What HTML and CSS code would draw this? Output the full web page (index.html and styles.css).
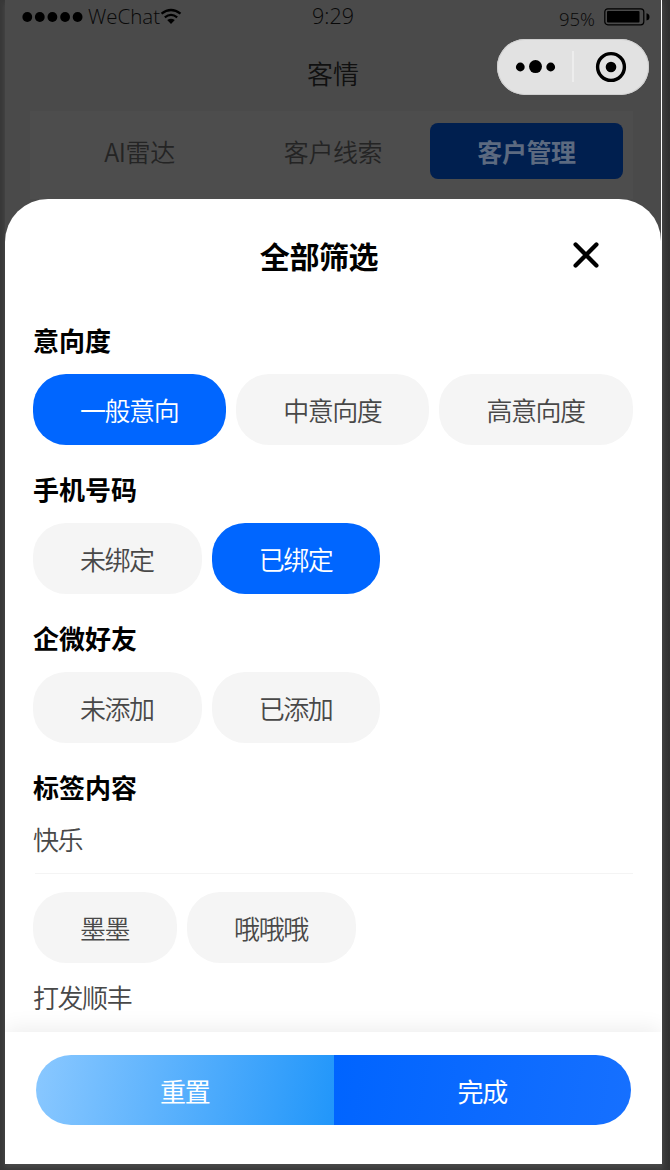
FILE: index.html
```html
<!DOCTYPE html>
<html lang="zh-CN">
<head>
<meta charset="utf-8">
<title>客情</title>
<link rel="stylesheet" href="styles.css">
</head>
<body>
<div class="device">
  <div class="page">
    <div class="status">
      <div class="carrier">
        <svg class="signal" width="62" height="12" viewBox="0 0 62 12"><circle cx="5.3" cy="6" r="4.9"/><circle cx="17.8" cy="6" r="4.9"/><circle cx="30.4" cy="6" r="4.9"/><circle cx="43.1" cy="6" r="4.9"/><circle cx="55.6" cy="6" r="4.9"/></svg>
        <span class="network">WeChat</span>
        <svg class="wifi" width="22" height="17" viewBox="0 0 22 17"><path d="M1.5 5.6Q11-1.6 20.5 5.6M4.8 9.3Q11 4.5 17.2 9.3" fill="none" stroke="#000" stroke-width="2.3"/><path d="M7.2 12Q11 9.4 14.8 12L11 16Z"/></svg>
      </div>
      <div class="time">9:29</div>
      <div class="power">
        <span class="percent">95%</span>
        <svg width="46" height="18" viewBox="0 0 46 18"><rect x=".8" y=".8" width="39" height="16" rx="3" fill="none" stroke="#000" stroke-width="1.2"/><rect x="3" y="3" width="32.5" height="11.5" rx="1"/><path d="M42.5 5.3Q45.5 6 45.5 9T42.5 12.5Z"/></svg>
      </div>
    </div>
    <div class="nav">客情</div>
    <div class="tabs">
      <div class="tab">AI雷达</div>
      <div class="tab">客户线索</div>
      <div class="tab tab-active">客户管理</div>
    </div>
    <div class="capsule">
      <svg width="152" height="56" viewBox="0 0 152 56"><circle cx="23.3" cy="28" r="4.4"/><circle cx="38.5" cy="27.6" r="6.5"/><circle cx="53.7" cy="28" r="4.4"/><path d="M76 12v31" stroke="#f1f1f1" stroke-width="1.5"/><circle cx="114" cy="28" r="13.4" fill="none" stroke="#000" stroke-width="3.4"/><circle cx="114" cy="28" r="5.3"/></svg>
    </div>
  </div>
  <div class="sheet">
    <div class="sheet-head">
      <span class="sheet-title">全部筛选</span>
      <svg class="close" width="26" height="26" viewBox="0 0 26 26"><path d="M2.6 2.6L23.4 23.4M23.4 2.6L2.6 23.4" stroke="#000" stroke-width="4.3" stroke-linecap="round"/></svg>
    </div>
    <div class="filters">
      <h3 class="group-title">意向度</h3>
      <div class="options"><span class="chip chip-on">一般意向</span><span class="chip">中意向度</span><span class="chip">高意向度</span></div>
      <h3 class="group-title">手机号码</h3>
      <div class="options"><span class="chip">未绑定</span><span class="chip chip-on">已绑定</span></div>
      <h3 class="group-title">企微好友</h3>
      <div class="options"><span class="chip">未添加</span><span class="chip">已添加</span></div>
      <h3 class="group-title">标签内容</h3>
      <div class="tag-name">快乐</div>
      <div class="divider"></div>
      <div class="options"><span class="chip">墨墨</span><span class="chip">哦哦哦</span></div>
      <div class="tag-name tag-next">打发顺丰</div>
    </div>
    <div class="actions">
      <div class="btn reset">重置</div>
      <div class="btn done">完成</div>
    </div>
  </div>
</div>
</body>
</html>
```
FILE: styles.css
```css
* { box-sizing: border-box; }
body {
  margin: 0;
  height: 1170px;
  padding-left: 5px;
  overflow: hidden;
  background: linear-gradient(90deg, #383838 0 655px, #3b3b3b 661px, #303030 670px);
  font-family: "Noto Sans CJK SC", sans-serif;
  font-size: 26px;
}
.device {
  position: relative;
  width: 657px;
  height: 1164px;
  background: #4a4a4a;
  border-right: 1px solid #fff;
  box-shadow: 0 3px 5px #4c4c4c;
}
.page { height: 199px; }
.status {
  display: grid;
  grid-template-columns: 1fr auto 1fr;
  height: 34px;
  padding: 0 11px 0 17px;
  font-family: "Open Sans", "Noto Sans", sans-serif;
  font-weight: 300;
  color: #080808;
}
.carrier, .power { display: flex; align-items: flex-start; }
.signal { margin: 11px 4px 0 0; }
.network { width: 72px; font-size: 20.5px; line-height: 33px; white-space: nowrap; }
.wifi { margin-top: 8px; }
.time { width: 48px; font-size: 21.5px; line-height: 31px; }
.power { justify-content: flex-end; }
.percent { margin-right: 9px; font-size: 18.5px; line-height: 37px; }
.power svg { margin-top: 8px; }
.nav {
  height: 78px;
  line-height: 77px;
  text-align: center;
  font-weight: 350;
  color: #101010;
}
.tabs {
  display: grid;
  grid-template-columns: repeat(3, 193px);
  justify-content: space-between;
  margin: -1px 28px 0 25px;
  height: 88px;
  padding: 12px 10px 20px 13px;
  background: #4d4d4d;
}
.tab {
  height: 56px;
  line-height: 57px;
  text-align: center;
  font-size: 25px;
  font-weight: 350;
  letter-spacing: -0.4px;
  color: #242424;
  border-radius: 8px;
}
.tab-active { background: #001f4f; color: #5c6a80; font-weight: 700; }
.capsule {
  position: absolute;
  left: 492px;
  top: 39px;
  width: 152px;
  height: 56px;
  border-radius: 28px;
  background: #e2e2e2;
  box-shadow: inset 0 0 0 1px #cfcfcf;
}
.capsule svg { display: block; }
.sheet {
  display: flex;
  flex-direction: column;
  height: 965px;
  background: #fff;
  border-radius: 43px 42px 0 0;
  overflow: hidden;
}
.sheet-head {
  display: grid;
  grid-template-columns: 1fr auto 1fr;
  height: 109px;
  padding: 2px 62px 0 34px;
}
.sheet-title {
  grid-column: 2;
  line-height: 109px;
  font-size: 30px;
  font-weight: 700;
  letter-spacing: -0.4px;
}
.close { justify-self: end; margin-top: 41px; }
.filters { height: 724px; padding: 0 28px; }
.group-title {
  margin: 0;
  height: 66px;
  line-height: 64px;
  font-size: 26px;
  font-weight: 700;
}
.options { display: flex; gap: 10px; margin-bottom: 12px; }
.chip {
  height: 71px;
  padding: 0 48px 0 47px;
  border-radius: 33px;
  background: #f5f5f5;
  color: #484848;
  font-weight: 350;
  line-height: 71px;
  letter-spacing: -1.45px;
  white-space: nowrap;
}
.chip-on { background: #06f; color: #fff; }
.tag-name {
  height: 36px;
  line-height: 35px;
  font-weight: 350;
  letter-spacing: -1.45px;
  color: #484848;
}
.tag-next { margin-top: 16px; }
.divider { height: 1px; margin: 16px 0 18px 2px; background: #f4f4f4; }
.actions {
  display: flex;
  height: 132px;
  padding: 23px 30px 39px 31px;
  background: #fff;
  box-shadow: 0 -4px 20px rgba(0, 0, 0, 0.07);
}
.btn {
  flex: 1;
  line-height: 71px;
  text-align: center;
  letter-spacing: -1.2px;
  color: #fff;
}
.reset { background: linear-gradient(100deg, #8ac8ff, #2196fa); border-radius: 35px 0 0 35px; }
.done { background: linear-gradient(100deg, #0064ff, #1670ff); border-radius: 0 35px 35px 0; }
```
